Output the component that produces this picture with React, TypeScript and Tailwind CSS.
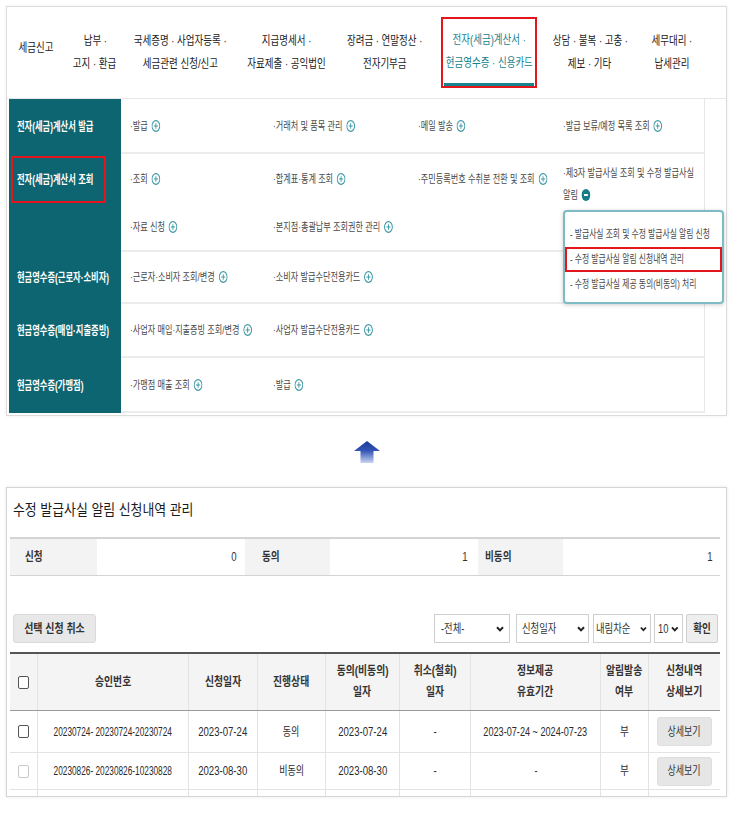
import React from 'react';

type N = React.ReactNode;

function Sx({ c, children }: { c: string; children: N }) {
  return <span className={`inline-block whitespace-nowrap ${c}`}>{children}</span>;
}

function Plus() {
  return (
    <svg width="12" height="12" viewBox="0 0 12 12" className="inline-block align-[-2px] ml-[5px]">
      <circle cx="6" cy="6" r="5.3" fill="white" stroke="#3a98a4" strokeWidth="1.3" />
      <path d="M6 3.2V8.8M3.2 6H8.8" stroke="#3a98a4" strokeWidth="1.2" />
    </svg>
  );
}

function Minus() {
  return (
    <svg width="12" height="12" viewBox="0 0 12 12" className="inline-block align-[-2px] ml-[5px]">
      <circle cx="6" cy="6" r="6" fill="#157c88" />
      <path d="M3.4 6H8.6" stroke="white" strokeWidth="1.8" />
    </svg>
  );
}

function Chevron() {
  return (
    <svg width="8" height="6" viewBox="0 0 8 6">
      <path d="M1 1.2L4 4.4L7 1.2" fill="none" stroke="#222" strokeWidth="2" />
    </svg>
  );
}

function Item({ t }: { t: string }) {
  return (
    <div className="pl-[9px] flex items-center min-w-0">
      <Sx c="origin-left scale-x-[0.74] text-[11px] leading-[22px] text-[#484848]">
        ·{t}
        <Plus />
      </Sx>
    </div>
  );
}

function Label({ t }: { t: string }) {
  return <Sx c="origin-left scale-x-[0.69] text-[12px] font-bold text-white">{t}</Sx>;
}

function Row({ label, items, h }: { label: string; items: string[]; h: string }) {
  return (
    <div className={`flex ${h}`}>
      <div className="w-[112px] bg-[#0d6571] flex items-center pl-[8px]">
        <Label t={label} />
      </div>
      <div className="w-[584px] grid grid-cols-[143px_145px_145px_151px] items-center border-b-2 border-b-[#ececec] border-r border-r-[#e6e6e6]">
        {items.map((t) => (
          <Item key={t} t={t} />
        ))}
      </div>
    </div>
  );
}

function NavItem({ w, lines }: { w: string; lines: string[] }) {
  return (
    <div className={`${w} flex flex-col items-center leading-[23px] text-[12.5px] text-[#222]`}>
      {lines.map((l) => (
        <Sx key={l} c="origin-center scale-x-[0.76]">
          {l}
        </Sx>
      ))}
    </div>
  );
}

function Select({ w, label, pl, pr }: { w: string; label: string; pl: string; pr: string }) {
  return (
    <div className={`${w} ${pl} ${pr} h-full flex items-center justify-between border border-[#cfcfcf] bg-white`}>
      <Sx c="origin-left scale-x-[0.78] text-[12px] text-[#333]">{label}</Sx>
      <Chevron />
    </div>
  );
}

const COLS = 'grid grid-cols-[27px_151px_69px_68px_74px_71px_130px_48px_72px]';
const CELL = 'flex items-center justify-center border-l border-l-[#e3e3e3] min-w-0';

function Box({ light }: { light?: boolean }) {
  return (
    <span
      className={`w-[11px] h-[13px] rounded-[2px] border bg-white ${light ? 'border-[#c9c9c9]' : 'border-[#555]'}`}
    />
  );
}

function DetailBtn() {
  return (
    <div className="w-[55px] h-[29px] rounded-[3px] bg-[#e6e6e6] border border-[#dedede] flex items-center justify-center">
      <Sx c="origin-center scale-x-[0.75] text-[12px] text-[#333]">상세보기</Sx>
    </div>
  );
}

function DataRow({
  h,
  light,
  no,
  date,
  state,
  agree,
  period,
}: {
  h: string;
  light?: boolean;
  no: string;
  date: string;
  state: string;
  agree: string;
  period: string;
}) {
  const t = 'text-[12px] text-[#2a2a2a]';
  return (
    <div className={`${COLS} ${h} border-b border-b-[#e3e3e3]`}>
      <div className="flex items-center justify-center">
        <Box light={light} />
      </div>
      <div className={CELL}>
        <Sx c={`origin-center scale-x-[0.69] ${t}`}>{no}</Sx>
      </div>
      <div className={CELL}>
        <Sx c={`origin-center scale-x-[0.8] ${t}`}>{date}</Sx>
      </div>
      <div className={CELL}>
        <Sx c={`origin-center scale-x-[0.75] ${t}`}>{state}</Sx>
      </div>
      <div className={CELL}>
        <Sx c={`origin-center scale-x-[0.8] ${t}`}>{agree}</Sx>
      </div>
      <div className={CELL}>
        <Sx c={`origin-center scale-x-[0.8] ${t}`}>-</Sx>
      </div>
      <div className={CELL}>
        <Sx c={`origin-center scale-x-[0.76] ${t}`}>{period}</Sx>
      </div>
      <div className={CELL}>
        <Sx c={`origin-center scale-x-[0.8] ${t}`}>부</Sx>
      </div>
      <div className={CELL}>
        <DetailBtn />
      </div>
    </div>
  );
}

export default function App() {
  const headers: string[][] = [
    [],
    ['승인번호'],
    ['신청일자'],
    ['진행상태'],
    ['동의(비동의)', '일자'],
    ['취소(철회)', '일자'],
    ['정보제공', '유효기간'],
    ['알림발송', '여부'],
    ['신청내역', '상세보기'],
  ];
  return (
    <div className="w-[734px] h-[815px] bg-white px-[6px] pt-[6px] overflow-hidden font-['Liberation_Sans','Noto_Sans_CJK_KR',sans-serif]">
      {/* Top panel */}
      <div className="w-[721px] h-[410px] border border-[#dcdcdc] shadow-[0_0_3px_rgba(0,0,0,0.08)] bg-white">
        <div className="h-[92px] flex items-center border-b border-b-[#e6e6e6]">
          <div className="w-[58px] mb-[9px] flex justify-center text-[12.5px] text-[#222]">
            <Sx c="origin-center scale-x-[0.76]">세금신고</Sx>
          </div>
          <NavItem w="w-[60px]" lines={['납부 ·', '고지 · 환급']} />
          <NavItem w="w-[110px]" lines={['국세증명 · 사업자등록 ·', '세금관련 신청/신고']} />
          <NavItem w="w-[104px]" lines={['지급명세서 ·', '자료제출 · 공익법인']} />
          <NavItem w="w-[92px]" lines={['장려금 · 연말정산 ·', '전자기부금']} />
          <div className="ml-[10px] w-[96px] h-[71px] border-2 border-[#e3161b] flex flex-col items-center pt-[10px] leading-[23px] text-[12.5px] text-[#16838f]">
            <Sx c="origin-center scale-x-[0.76]">전자(세금)계산서 ·</Sx>
            <Sx c="origin-center scale-x-[0.76]">현금영수증 · 신용카드</Sx>
            <div className="mt-auto self-stretch mx-[1px] h-[3px] bg-[#16838f]" />
          </div>
          <NavItem w="w-[106px]" lines={['상담 · 불복 · 고충 ·', '제보 · 기타']} />
          <NavItem w="w-[58px]" lines={['세무대리 ·', '납세관리']} />
        </div>

        <div className="pl-[2px]">
          <Row
            h="h-[55px]"
            label="전자(세금)계산서 발급"
            items={['발급', '거래처 및 품목 관리', '메일 발송', '발급 보류/예정 목록 조회']}
          />

          <div className="flex h-[98px] relative">
            <div className="w-[112px] bg-[#0d6571] pt-[2px] pl-[2px]">
              <div className="w-[95px] h-[47px] border-2 border-[#e3161b] flex items-center pl-[4px]">
                <Label t="전자(세금)계산서 조회" />
              </div>
            </div>
            <div className="w-[584px] flex flex-col border-b-2 border-b-[#ececec] border-r border-r-[#e6e6e6]">
              <div className="h-[50px] grid grid-cols-[143px_145px_145px_151px] items-start">
                <div className="pt-[14px]">
                  <Item t="조회" />
                </div>
                <div className="pt-[14px]">
                  <Item t="합계표·통계 조회" />
                </div>
                <div className="pt-[14px]">
                  <Item t="주민등록번호 수취분 전환 및 조회" />
                </div>
                <div className="pt-[8px] pl-[9px] flex flex-col">
                  <Sx c="origin-left scale-x-[0.74] text-[11px] leading-[22px] text-[#484848]">
                    ·제3자 발급사실 조회 및 수정 발급사실
                  </Sx>
                  <Sx c="origin-left scale-x-[0.74] text-[11px] leading-[22px] text-[#484848]">
                    알림
                    <Minus />
                  </Sx>
                </div>
              </div>
              <div className="h-[46px] grid grid-cols-[143px_145px_145px_151px] items-center">
                <Item t="자료 신청" />
                <Item t="본지점·총괄납부 조회권한 관리" />
              </div>
            </div>

            <div className="absolute left-[554px] top-[56px] w-[161px] h-[94px] z-10 bg-white border-2 border-[#7dbcc4] rounded-[4px] shadow-[0_1px_4px_rgba(0,0,0,0.2)] pt-[10px]">
              {[
                '- 발급사실 조회 및 수정 발급사실 알림 신청',
                '- 수정 발급사실 알림 신청내역 관리',
                '- 수정 발급사실 제공 동의(비동의) 처리',
              ].map((t, i) => (
                <div
                  key={t}
                  className={`h-[25px] flex items-center pl-[3px] border-2 ${
                    i === 1 ? 'border-[#e3161b]' : 'border-transparent'
                  }`}
                >
                  <Sx c="origin-left scale-x-[0.71] text-[11px] text-[#484848]">{t}</Sx>
                </div>
              ))}
            </div>
          </div>

          <Row
            h="h-[52px]"
            label="현금영수증(근로자·소비자)"
            items={['근로자·소비자 조회/변경', '소비자 발급수단전용카드']}
          />
          <Row
            h="h-[54px]"
            label="현금영수증(매입·지출증빙)"
            items={['사업자 매입·지출증빙 조회/변경', '사업자 발급수단전용카드']}
          />
          <Row h="h-[55px]" label="현금영수증(가맹점)" items={['가맹점 매출 조회', '발급']} />
        </div>
      </div>

      {/* Arrow */}
      <div className="h-[71px] flex justify-center pt-[25px]">
        <svg width="26" height="22" viewBox="0 0 26 22">
          <defs>
            <linearGradient id="ag" x1="0" y1="0" x2="0" y2="1">
              <stop offset="0" stopColor="#1c3a9a" />
              <stop offset="0.45" stopColor="#3556b5" />
              <stop offset="1" stopColor="#c8d4f2" />
            </linearGradient>
          </defs>
          <path d="M13 0L26 10H19.5V22H6.5V10H0Z" fill="url(#ag)" />
        </svg>
      </div>

      {/* Bottom panel */}
      <div className="w-[721px] h-[310px] border border-[#d6d6d6] shadow-[0_0_3px_rgba(0,0,0,0.1)] bg-white pl-[3px] pr-[6px] pt-[12px]">
        <div className="h-[20px] flex items-center pl-[3px]">
          <Sx c="origin-left scale-x-[0.86] text-[15px] text-[#1a1a1a]">수정 발급사실 알림 신청내역 관리</Sx>
        </div>

        <div className="mt-[17px] h-[39px] flex border-t-2 border-t-[#d4d4d4] border-b border-b-[#d4d4d4] text-[12px] text-[#333]">
          <div className="w-[87px] bg-[#f3f3f3] flex items-center pl-[15px]">
            <Sx c="origin-left scale-x-[0.8] font-bold">신청</Sx>
          </div>
          <div className="w-[148px] flex items-center justify-end pr-[8px]">
            <Sx c="origin-right scale-x-[0.8]">0</Sx>
          </div>
          <div className="w-[85px] bg-[#f3f3f3] flex items-center pl-[17px]">
            <Sx c="origin-left scale-x-[0.8] font-bold">동의</Sx>
          </div>
          <div className="w-[148px] flex items-center justify-end pr-[10px]">
            <Sx c="origin-right scale-x-[0.8]">1</Sx>
          </div>
          <div className="w-[85px] bg-[#f3f3f3] flex items-center pl-[7px]">
            <Sx c="origin-left scale-x-[0.8] font-bold">비동의</Sx>
          </div>
          <div className="flex-1 flex items-center justify-end pr-[7px]">
            <Sx c="origin-right scale-x-[0.8]">1</Sx>
          </div>
        </div>

        <div className="mt-[38px] h-[29px] flex items-center">
          <div className="ml-[3px] w-[83px] h-full bg-[#e8e8e8] border border-[#dadada] rounded-[3px] flex items-center justify-center">
            <Sx c="origin-center scale-x-[0.83] text-[12px] font-bold text-[#333]">선택 신청 취소</Sx>
          </div>
          <div className="ml-auto mr-[2px] h-full flex">
            <Select w="w-[76px]" label="-전체-" pl="pl-[6px]" pr="pr-[5px]" />
            <div className="w-[6px]" />
            <Select w="w-[73px]" label="신청일자" pl="pl-[5px]" pr="pr-[3px]" />
            <div className="w-[4px]" />
            <Select w="w-[58px]" label="내림차순" pl="pl-[2px]" pr="pr-[3px]" />
            <div className="w-[3px]" />
            <Select w="w-[29px]" label="10" pl="pl-[3px]" pr="pr-[3px]" />
            <div className="w-[3px]" />
            <div className="w-[32px] h-full bg-[#eeeeee] border border-[#cfcfcf] rounded-[2px] flex items-center justify-center">
              <Sx c="origin-center scale-x-[0.8] text-[12px] font-bold text-[#333]">확인</Sx>
            </div>
          </div>
        </div>

        <div className="mt-[9px]">
          <div className={`${COLS} h-[59px] border-t-2 border-t-[#555] border-b border-b-[#9a9a9a] bg-[#f4f4f4]`}>
            {headers.map((lines, i) =>
              i === 0 ? (
                <div key={i} className="flex items-center justify-center">
                  <Box />
                </div>
              ) : (
                <div
                  key={i}
                  className={`${CELL} flex-col leading-[21px] text-[12px] font-bold text-[#333]`}
                >
                  {lines.map((l) => (
                    <Sx key={l} c="origin-center scale-x-[0.82]">
                      {l}
                    </Sx>
                  ))}
                </div>
              )
            )}
          </div>
          <DataRow
            h="h-[42px]"
            no="20230724- 20230724-20230724"
            date="2023-07-24"
            state="동의"
            agree="2023-07-24"
            period="2023-07-24 ~ 2024-07-23"
          />
          <DataRow
            h="h-[37px]"
            light
            no="20230826- 20230826-10230828"
            date="2023-08-30"
            state="비동의"
            agree="2023-08-30"
            period="-"
          />
          <div className={`${COLS} h-[6px]`}>
            {headers.map((_, i) => (
              <div key={i} className={i === 0 ? '' : 'border-l border-l-[#e3e3e3]'} />
            ))}
          </div>
        </div>
      </div>
    </div>
  );
}
